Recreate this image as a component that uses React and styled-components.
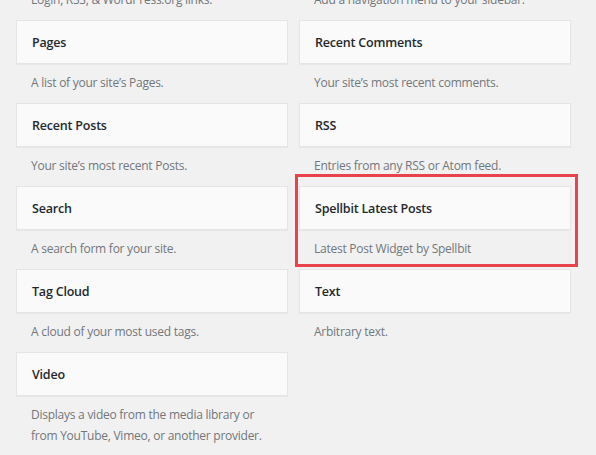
import styled, { createGlobalStyle } from "styled-components";

const GlobalStyle = createGlobalStyle`
  html, body {
    margin: 0;
    padding: 0;
    background: #f1f1f1;
    overflow: hidden;
  }
  body {
    font-family: "Open Sans", "Noto Sans", sans-serif;
    font-size: 13px;
    color: #444;
  }
`;

const widgets = [
  { title: "Meta", desc: "Login, RSS, & WordPress.org links." },
  { title: "Navigation Menu", desc: "Add a navigation menu to your sidebar." },
  { title: "Pages", desc: "A list of your site’s Pages." },
  { title: "Recent Comments", desc: "Your site’s most recent comments." },
  { title: "Recent Posts", desc: "Your site’s most recent Posts." },
  { title: "RSS", desc: "Entries from any RSS or Atom feed." },
  { title: "Search", desc: "A search form for your site." },
  { title: "Spellbit Latest Posts", desc: "Latest Post Widget by Spellbit", marked: true },
  { title: "Tag Cloud", desc: "A cloud of your most used tags." },
  { title: "Text", desc: "Arbitrary text." },
  { title: "Video", desc: "Displays a video from the media library or from YouTube, Vimeo, or another provider." },
];

// the list is scrolled: only the description of the first row shows
const Scroller = styled.div`
  margin-top: -63px;
  padding: 0 25px 0 16px;
`;

const WidgetList = styled.div`
  display: grid;
  grid-template-columns: 272px 272px;
  column-gap: 11px;
`;

const Widget = styled.div`
  position: relative;
`;

const WidgetTop = styled.div`
  background: #fafafa;
  border: 1px solid #e5e5e5;
  box-shadow: 0 1px 1px rgba(0, 0, 0, 0.04);
`;

const Title = styled.h3`
  margin: 0;
  padding: 15px 15px 14px;
  font-size: 12.5px;
  font-weight: 600;
  line-height: 13px;
  letter-spacing: -0.2px;
  color: #23282d;
`;

const Description = styled.p`
  margin: 0;
  padding: 8px 15px 10px;
  font-size: 12px;
  line-height: 21px;
  color: #72777c;
  letter-spacing: -0.25px;
`;

const Highlight = styled.div`
  position: absolute;
  left: -4px;
  top: -12px;
  width: 277px;
  height: 87px;
  border: 3px solid #e8434a;
  pointer-events: none;
`;

export default function App() {
  return (
    <>
      <GlobalStyle />
      <Scroller>
        <WidgetList>
          {widgets.map((w) => (
            <Widget key={w.title}>
              <WidgetTop>
                <Title>{w.title}</Title>
              </WidgetTop>
              <Description>{w.desc}</Description>
              {w.marked && <Highlight />}
            </Widget>
          ))}
        </WidgetList>
      </Scroller>
    </>
  );
}
